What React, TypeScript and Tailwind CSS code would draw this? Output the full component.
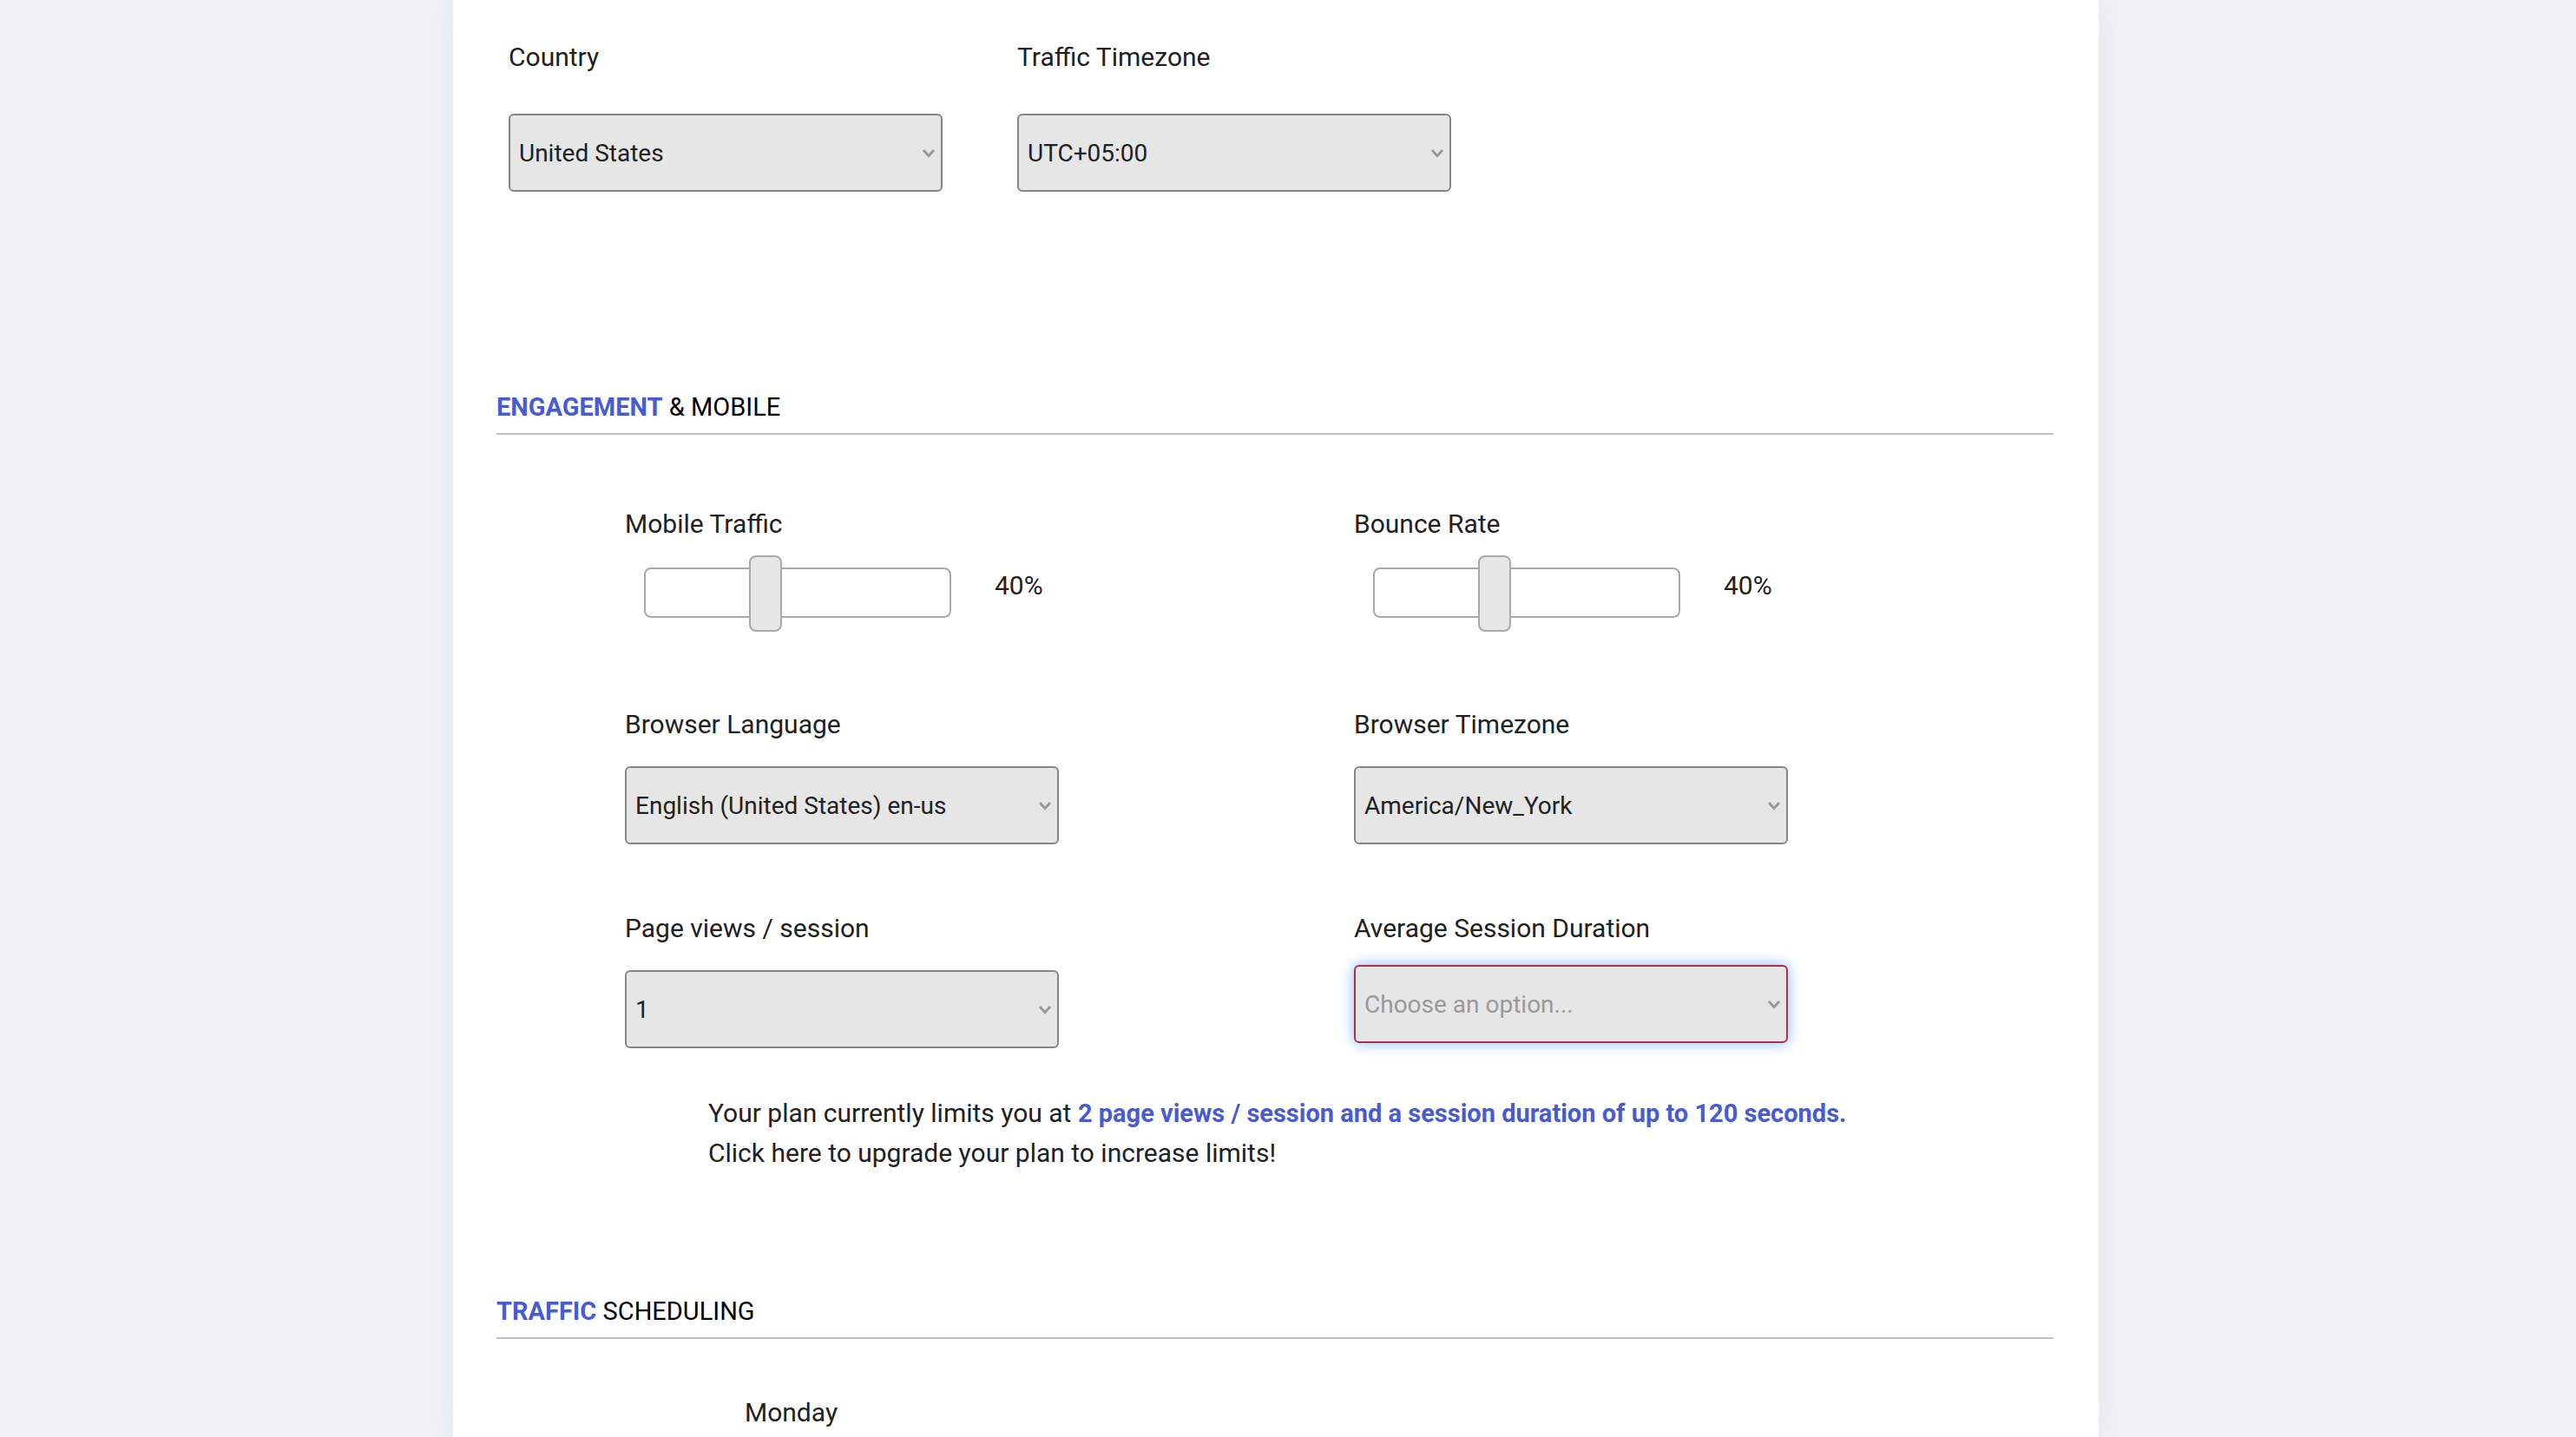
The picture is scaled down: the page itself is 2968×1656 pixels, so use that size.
import React, { useId, useState } from 'react';

interface SelectFieldProps {
  label: string;
  options: string[];
  placeholder?: string;
  invalid?: boolean;
  gap: string;
}

function SelectField({ label, options, placeholder, invalid, gap }: SelectFieldProps) {
  const id = useId();
  const [value, setValue] = useState(placeholder ? '' : options[0]);

  return (
    <div className={`flex flex-col items-start ${gap}`}>
      <label htmlFor={id}>{label}</label>
      <div className="relative w-[500px] max-w-full">
        <select
          id={id}
          value={value}
          onChange={(e) => setValue(e.target.value)}
          className={`
            block h-[90px] w-full appearance-none rounded-md border-2 bg-[#e6e6e6] pl-[10px] pr-10 text-[28px] outline-none
            ${invalid ? 'border-[#ab3049] shadow-[0_0_16px_#7fb5ff]' : 'border-[#858585]'}
            ${value === '' ? 'text-[#999999]' : 'text-[#212121]'}
          `}
        >
          {placeholder && <option value="" disabled>{placeholder}</option>}
          {options.map((option) => (
            <option key={option} value={option}>{option}</option>
          ))}
        </select>
        {/* Arrow */}
        <svg
          className="pointer-events-none absolute right-2 top-10 h-[11px] w-4"
          viewBox="0 0 16 11"
          fill="none"
          stroke="#999999"
          strokeWidth={3}
        >
          <path d="M2 2L8 8.5L14 2" />
        </svg>
      </div>
    </div>
  );
}

function SliderField({ label }: { label: string }) {
  const id = useId();
  const [value, setValue] = useState(40);

  return (
    <div className="flex flex-col gap-[14px]">
      <label htmlFor={id}>{label}</label>
      <div className="flex items-start gap-[50px] pl-[22px]">
        <input
          id={id}
          type="range"
          min={0}
          max={100}
          value={value}
          onChange={(e) => setValue(Number(e.target.value))}
          className="
            h-[86px] w-[354px] appearance-none bg-transparent
            [&::-webkit-slider-runnable-track]:box-border
            [&::-webkit-slider-runnable-track]:h-[58px]
            [&::-webkit-slider-runnable-track]:rounded-lg
            [&::-webkit-slider-runnable-track]:border-2
            [&::-webkit-slider-runnable-track]:border-[#a9a9a9]
            [&::-webkit-slider-runnable-track]:bg-white
            [&::-webkit-slider-runnable-track]:pr-[14px]
            [&::-webkit-slider-thumb]:mt-[-16px]
            [&::-webkit-slider-thumb]:box-border
            [&::-webkit-slider-thumb]:h-[88px]
            [&::-webkit-slider-thumb]:w-[38px]
            [&::-webkit-slider-thumb]:appearance-none
            [&::-webkit-slider-thumb]:rounded-lg
            [&::-webkit-slider-thumb]:border-2
            [&::-webkit-slider-thumb]:border-[#a9a9a9]
            [&::-webkit-slider-thumb]:bg-[#e6e6e6]
          "
        />
        <output htmlFor={id} className="pt-3">{value}%</output>
      </div>
    </div>
  );
}

function SectionTitle({ accent, rest }: { accent: string; rest: string }) {
  return (
    <h2 className="border-b-2 border-[#c1c1c1] pb-[7px] text-[29px] text-black">
      <b className="font-bold text-[#475bd2]">{accent}</b> {rest}
    </h2>
  );
}

export default function App() {
  return (
    <div className="grid min-h-screen grid-cols-[522fr_1896fr_550fr] bg-[#eff1f6] font-['Roboto',sans-serif] text-[30px] leading-[45px] text-[#212121]">
      <main className="col-start-2 bg-white pl-[50px] pr-[52px] shadow-[0_0_36px_rgba(153,198,175,0.16)]">
        {/* Location */}
        <section className="flex flex-wrap gap-[86px] pl-[14px] pt-[43px]">
          <SelectField label="Country" options={['United States']} gap="gap-[43px]" />
          <SelectField label="Traffic Timezone" options={['UTC+05:00']} gap="gap-[43px]" />
        </section>

        {/* Engagement */}
        <section className="pt-[226px]">
          <SectionTitle accent="ENGAGEMENT" rest="& MOBILE" />
          <div className="grid grid-cols-2 gap-x-[34px] pl-[148px] pt-20">
            <SliderField label="Mobile Traffic" />
            <SliderField label="Bounce Rate" />
          </div>
          <div className="grid grid-cols-2 gap-x-[34px] gap-y-[74px] pl-[148px] pt-[86px]">
            <SelectField label="Browser Language" options={['English (United States) en-us']} gap="gap-[26px]" />
            <SelectField label="Browser Timezone" options={['America/New_York']} gap="gap-[26px]" />
            <SelectField label="Page views / session" options={['1', '2']} gap="gap-[26px]" />
            <SelectField
              label="Average Session Duration"
              options={['30 seconds', '60 seconds', '120 seconds']}
              placeholder="Choose an option..."
              invalid
              gap="gap-5"
            />
          </div>
          <p className="pl-[244px] pt-[52px]">
            Your plan currently limits you at{' '}
            <b className="text-[29px] font-bold text-[#475bd2]">
              2 page views / session and a session duration of up to 120 seconds.
            </b>
            <br />
            <a href="#upgrade">Click here to upgrade your plan to increase limits!</a>
          </p>
        </section>

        {/* Scheduling */}
        <section className="pt-[138px]">
          <SectionTitle accent="TRAFFIC" rest="SCHEDULING" />
          <h3 className="pl-[286px] pt-[62px]">Monday</h3>
        </section>
      </main>
    </div>
  );
}
